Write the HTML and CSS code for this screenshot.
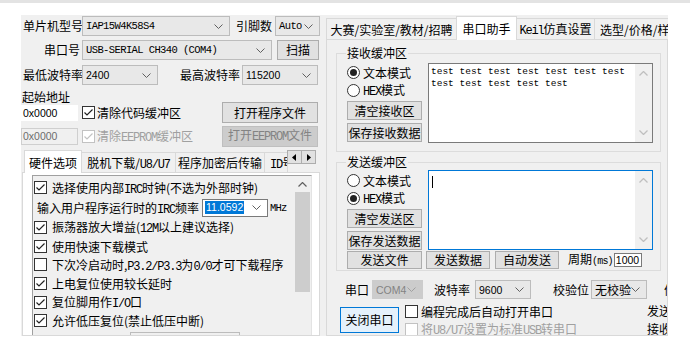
FILE: index.html
```html
<!DOCTYPE html>
<html>
<head>
<meta charset="utf-8">
<title>STC-ISP</title>
<link rel="stylesheet" href="styles.css">
</head>
<body>
<div class="topband"></div>
<div class="app">
  <section class="leftcol">
    <div class="row r1">
      <span class="lbl lw">单片机型号</span>
      <div class="combo w148"><span class="mono">IAP15W4K58S4</span><svg class="chev" width="9" height="5" viewBox="0 0 9 5"><path d="M0.5 0.5L4.5 4.5L8.5 0.5"/></svg></div>
      <span class="lbl ml6">引脚数</span>
      <div class="combo w45 ml3"><span class="mono">Auto</span><svg class="chev" width="9" height="5" viewBox="0 0 9 5"><path d="M0.5 0.5L4.5 4.5L8.5 0.5"/></svg></div>
    </div>
    <div class="row r2">
      <span class="lbl lw tar">串口号</span>
      <div class="combo w190"><span class="mono">USB-SERIAL CH340 (COM4)</span><svg class="chev" width="9" height="5" viewBox="0 0 9 5"><path d="M0.5 0.5L4.5 4.5L8.5 0.5"/></svg></div>
      <button class="btn w42 ml5">扫描</button>
    </div>
    <div class="row r3">
      <span class="lbl lw">最低波特率</span>
      <div class="combo w76"><span class="num">2400</span><svg class="chev" width="9" height="5" viewBox="0 0 9 5"><path d="M0.5 0.5L4.5 4.5L8.5 0.5"/></svg></div>
      <span class="lbl ml22">最高波特率</span>
      <div class="combo w76 ml2"><span class="num">115200</span><svg class="chev" width="9" height="5" viewBox="0 0 9 5"><path d="M0.5 0.5L4.5 4.5L8.5 0.5"/></svg></div>
    </div>
    <div class="row r4"><span class="lbl">起始地址</span></div>
    <div class="row r5">
      <div class="addr">0x0000</div>
      <label class="chk ml4"><span class="box"><svg width="11" height="11" viewBox="0 0 11 11"><path d="M1.5 5.5L4 8L9.5 2.5"/></svg></span><span class="tx">清除代码缓冲区</span></label>
      <button class="btn w96 push">打开程序文件</button>
    </div>
    <div class="row r6">
      <div class="addr dis">0x0000</div>
      <label class="chk ml4 dis"><span class="box"><svg width="11" height="11" viewBox="0 0 11 11"><path d="M1.5 5.5L4 8L9.5 2.5"/></svg></span><span class="tx">清除<span class="m">EEPROM</span>缓冲区</span></label>
      <button class="btn w96 push dis">打开<span class="m">EEPROM</span>文件</button>
    </div>
    <div class="ltabs">
      <div class="tab sel t1"><span class="tx">硬件选项</span></div>
      <div class="tab t2"><span class="tx">脱机下载/<span class="m">U8/U7</span></span></div>
      <div class="tab t3"><span class="tx">程序加密后传输</span></div>
      <div class="tab t4"><span class="tx"><span class="m">ID</span>号</span></div>
      <div class="arrows">
        <span class="arr"><svg width="5" height="7" viewBox="0 0 5 7"><path d="M4 0L0 3.5L4 7Z"/></svg></span><span class="arr"><svg width="5" height="7" viewBox="0 0 5 7"><path d="M1 0L5 3.5L1 7Z"/></svg></span>
      </div>
    </div>
    <div class="lpanel">
      <div class="listbox">
        <div class="items">
          <div class="item"><span class="box"><svg width="11" height="11" viewBox="0 0 11 11"><path d="M1.5 5.5L4 8L9.5 2.5"/></svg></span><span class="tx">选择使用内部<span class="m">IRC</span>时钟(不选为外部时钟)</span></div>
          <div class="item freq"><span class="ftxt">输入用户程序运行时的<span class="m">IRC</span>频率</span><div class="fcombo"><span class="selv">11.0592</span><svg class="chev" width="9" height="5" viewBox="0 0 9 5"><path d="M0.5 0.5L4.5 4.5L8.5 0.5"/></svg></div><span class="m mhz">MHz</span></div>
          <div class="item"><span class="box"><svg width="11" height="11" viewBox="0 0 11 11"><path d="M1.5 5.5L4 8L9.5 2.5"/></svg></span><span class="tx">振荡器放大增益(<span class="m">12M</span>以上建议选择)</span></div>
          <div class="item"><span class="box"><svg width="11" height="11" viewBox="0 0 11 11"><path d="M1.5 5.5L4 8L9.5 2.5"/></svg></span><span class="tx">使用快速下载模式</span></div>
          <div class="item"><span class="box"></span><span class="tx">下次冷启动时,<span class="m">P3.2/P3.3</span>为<span class="m">0/0</span>才可下载程序</span></div>
          <div class="item"><span class="box"><svg width="11" height="11" viewBox="0 0 11 11"><path d="M1.5 5.5L4 8L9.5 2.5"/></svg></span><span class="tx">上电复位使用较长延时</span></div>
          <div class="item"><span class="box"><svg width="11" height="11" viewBox="0 0 11 11"><path d="M1.5 5.5L4 8L9.5 2.5"/></svg></span><span class="tx">复位脚用作<span class="m">I/O</span>口</span></div>
          <div class="item"><span class="box"><svg width="11" height="11" viewBox="0 0 11 11"><path d="M1.5 5.5L4 8L9.5 2.5"/></svg></span><span class="tx">允许低压复位(禁止低压中断)</span></div>
          <div class="item freq"><span class="ftxt ind">低压检测电压</span><div class="fcombo wide"></div></div>
        </div>
        <div class="vscroll">
          <svg class="up" width="9" height="5" viewBox="0 0 9 5"><path d="M0.5 4.5L4.5 0.5L8.5 4.5"/></svg>
          <div class="thumb"></div>
        </div>
      </div>
    </div>
  </section>

  <section class="rightcol">
    <div class="rtabs">
      <div class="tab r1t"><span class="tx">大赛/实验室/教材/招聘</span></div>
      <div class="tab sel r2t"><span class="tx">串口助手</span></div>
      <div class="tab r3t"><span class="tx"><span class="m">Keil</span>仿真设置</span></div>
      <div class="tab r4t"><span class="tx">选型/价格/样品</span></div>
    </div>
    <div class="rpanel">
      <fieldset class="group g1">
        <legend>接收缓冲区</legend>
        <div class="gbody">
          <div class="gctl">
            <label class="radio"><span class="rb on"></span><span class="tx">文本模式</span></label>
            <label class="radio"><span class="rb"></span><span class="tx"><span class="m">HEX</span>模式</span></label>
            <button class="btn gbtn b1">清空接收区</button>
            <button class="btn gbtn b2">保存接收数据</button>
          </div>
          <div class="textarea">
            <div class="tatext">test test test test test test test<br>test test test test test</div>
            <div class="tascroll"><svg width="9" height="5" viewBox="0 0 9 5"><path d="M0.5 4.5L4.5 0.5L8.5 4.5"/></svg><svg width="9" height="5" viewBox="0 0 9 5"><path d="M0.5 0.5L4.5 4.5L8.5 0.5"/></svg></div>
          </div>
        </div>
      </fieldset>
      <fieldset class="group g2">
        <legend>发送缓冲区</legend>
        <div class="gbody">
          <div class="gctl">
            <label class="radio"><span class="rb"></span><span class="tx">文本模式</span></label>
            <label class="radio"><span class="rb on"></span><span class="tx"><span class="m">HEX</span>模式</span></label>
            <button class="btn gbtn b1">清空发送区</button>
            <button class="btn gbtn b2">保存发送数据</button>
          </div>
          <div class="textarea focus">
            <div class="tatext"><span class="caret"></span></div>
            <div class="tascroll"><svg width="9" height="5" viewBox="0 0 9 5"><path d="M0.5 4.5L4.5 0.5L8.5 4.5"/></svg><svg width="9" height="5" viewBox="0 0 9 5"><path d="M0.5 0.5L4.5 4.5L8.5 0.5"/></svg></div>
          </div>
        </div>
        <div class="sendrow">
          <button class="btn sb1">发送文件</button>
          <button class="btn sb2">发送数据</button>
          <button class="btn sb3">自动发送</button>
          <span class="lbl period">周期<span class="m">(ms)</span></span>
          <div class="ms">1000</div>
        </div>
      </fieldset>
      <div class="portrow">
        <span class="lbl">串口</span>
        <div class="combo dis cport"><span class="num">COM4</span><svg class="chev" width="9" height="5" viewBox="0 0 9 5"><path d="M0.5 0.5L4.5 4.5L8.5 0.5"/></svg></div>
        <span class="lbl baudl">波特率</span>
        <div class="combo cbaud"><span class="num">9600</span><svg class="chev" width="9" height="5" viewBox="0 0 9 5"><path d="M0.5 0.5L4.5 4.5L8.5 0.5"/></svg></div>
        <span class="lbl parl">校验位</span>
        <div class="combo cpar"><span>无校验</span><svg class="chev" width="9" height="5" viewBox="0 0 9 5"><path d="M0.5 0.5L4.5 4.5L8.5 0.5"/></svg></div>
        <span class="lbl stopl">停止位</span>
      </div>
      <div class="bottomrow">
        <button class="btn closebtn">关闭串口</button>
        <div class="opts">
          <label class="chk"><span class="box"></span><span class="tx">编程完成后自动打开串口</span></label>
          <label class="chk dis"><span class="box"></span><span class="tx">将<span class="m">U8/U7</span>设置为标准<span class="m">USB</span>转串口</span></label>
        </div>
        <div class="stats">
          <span>发送</span>
          <span>接收</span>
        </div>
      </div>
    </div>
  </section>
</div>
</body>
</html>
```

FILE: styles.css
```css
* { box-sizing: border-box; }
body {
  margin: 0;
  background: #fff;
  font-family: "Noto Sans CJK SC", "Noto Sans", sans-serif;
  font-size: 12px;
  color: #000;
}
.topband { height: 3px; background: #e3e3e3; }
.app {
  margin: 12px 0 0 21px;
  width: 647px;
  height: 321px;
  background: #f0f0f0;
  display: flex;
  gap: 4px;
  overflow: hidden;
}
.tx { white-space: nowrap; }
.mono, .m {
  font-family: "Liberation Mono", monospace;
}
.mono { font-size: 10.5px; letter-spacing: -0.6px; }
.m { font-size: 12px; letter-spacing: -1.2px; }
.num { font-family: "Liberation Sans", sans-serif; font-size: 10.5px; }
.lbl { white-space: nowrap; line-height: 14px; }
.lw { width: 61px; padding-left: 2px; }
.tar { text-align: right; padding-right: 2px; padding-left: 0; }
.ml2 { margin-left: 2px; } .ml3 { margin-left: 3px; } .ml4 { margin-left: 4px; }
.ml5 { margin-left: 5px; } .ml6 { margin-left: 6px; } .ml22 { margin-left: 22px; }

.leftcol { width: 301px; flex: none; display: flex; flex-direction: column; }
.row { display: flex; align-items: center; flex: none; }
.r1 { margin-top: 1px; height: 20px; }
.r2 { margin-top: 4px; height: 20px; }
.r3 { margin-top: 5px; height: 20px; }
.r4 { margin-top: 5px; height: 14px; padding-left: 1px; }
.r5 { margin-top: -2px; height: 21px; }
.r6 { margin-top: 3px; height: 20px; }

.combo {
  height: 20px;
  border: 1px solid #bcbcbc;
  background: #e8e8e8;
  display: flex;
  align-items: center;
  justify-content: space-between;
  padding: 0 6px 0 3px;
  white-space: nowrap;
  flex: none;
}
.chev path { fill: none; stroke: #606060; stroke-width: 1; }
.w148 { width: 148px; } .w45 { width: 45px; } .w190 { width: 190px; }
.w76 { width: 76px; } .w42 { width: 42px; } .w96 { width: 96px; }

.btn {
  font-family: "Noto Sans CJK SC", sans-serif;
  font-size: 12px;
  color: #000;
  background: #e1e1e1;
  border: 1px solid #adadad;
  height: 20px;
  padding: 0;
  line-height: 16px;
  flex: none;
  white-space: nowrap;
}
.push { margin-left: auto; margin-right: 4px; height: 21px; }
.btn.dis { background: #cccccc; border-color: #bfbfbf; color: #838383; }

.addr {
  width: 57px; height: 16px;
  background: #fff;
  font-family: "Liberation Sans", sans-serif; font-size: 10.5px;
  line-height: 16px; padding-left: 2px;
  flex: none;
}
.addr.dis { height: 17px; background: #f0f0f0; border: 1px solid #cfcfcf; color: #6d6d6d; padding-left: 1px; line-height: 15px; }

.chk { display: flex; align-items: center; white-space: nowrap; }
.box {
  width: 13px; height: 13px; border: 1px solid #333;
  background: #fff; flex: none; margin-right: 2px;
  display: flex; align-items: center; justify-content: center;
}
.box path { fill: none; stroke: #222; stroke-width: 1.2; }
.chk.dis { color: #a0a0a0; }
.chk.dis .box { border-color: #c2c2c2; }
.chk.dis .box path { stroke: #c2c2c2; }

.ltabs { display: flex; margin-top: 4px; height: 22px; align-items: flex-end; flex: none; position: relative; z-index: 1; }
.tab {
  height: 20px;
  border: 1px solid #d9d9d9;
  border-bottom: none;
  background: #f0f0f0;
  display: flex; align-items: center; justify-content: center;
  white-space: nowrap; overflow: hidden; flex: none;
  margin-left: -1px;
}
.tab.sel { height: 23px; background: #fff; margin-bottom: -1px; position: relative; z-index: 2; }
.t1 { width: 58px; margin-left: 3px; }
.t2 { width: 95px; }
.t3 { width: 90px; }
.t4 { width: 24px; justify-content: flex-start; padding-left: 5px; }
.arrows { display: flex; margin-left: 0; align-self: flex-start; }
.arr {
  width: 15px; height: 14px; border: 1px solid #adadad; background: #e1e1e1;
  display: flex; align-items: center; justify-content: center; margin-left: -1px;
}
.arr path { fill: #000; }

.lpanel {
  margin-left: 1px;
  width: 298px;
  flex: 1;
  border: 1px solid #d9d9d9;
  background: #fff;
  padding: 2px 0 0 9px;
  overflow: hidden;
}
.listbox {
  width: 280px;
  height: 200px;
  border: 1px solid #a0a0a0;
  border-right-color: #e3e3e3;
  background: #f0f0f0;
  display: flex;
}
.items { flex: 1; padding-top: 2px; overflow: hidden; }
.item { height: 18.7px; display: flex; align-items: center; padding-left: 1px; white-space: nowrap; }
.item .box { margin-right: 5px; }
.item:first-child { height: 19px; }
.item.freq { height: 21px; }
.ftxt { padding-left: 3px; }
.ind { padding-left: 21px; }
.fcombo {
  width: 66px; height: 18px; margin-left: 3px;
  background: #fff; border: 1px solid #7a7a7a;
  display: flex; align-items: center; justify-content: space-between; padding: 0 6px 0 2px;
}
.fcombo.wide { width: 110px; border-color: #bcbcbc; background: #f0f0f0; }
.selv { background: #0078d7; color: #fff; font-family: "Liberation Sans", sans-serif; font-size: 10.5px; line-height: 13px; padding: 0 1px; }
.mhz { margin-left: 2px; font-size: 10.5px; letter-spacing: -0.8px; }
.vscroll { width: 17px; flex: none; background: #f0f0f0; display: flex; flex-direction: column; align-items: center; }
.vscroll .up { margin-top: 6px; }
.vscroll path { fill: none; stroke: #606060; stroke-width: 1.2; }
.thumb { width: 15px; height: 100px; background: #cdcdcd; margin-top: 5px; }

.rightcol { width: 342px; flex: none; display: flex; flex-direction: column; }
.rtabs { display: flex; height: 23px; margin-top: 1px; align-items: flex-end; flex: none; position: relative; z-index: 1; }
.rtabs .tab { height: 21px; }
.rtabs .tab.sel { height: 24px; }
.r1t { width: 131px; margin-left: 0; }
.r2t { width: 61px; }
.r3t { width: 79px; }
.r4t { width: 80px; justify-content: flex-start; padding-left: 5px; }
.rpanel {
  width: 342px;
  flex: 1;
  border: 1px solid #d9d9d9;
  background: #f0f0f0;
  display: flex; flex-direction: column;
  overflow: hidden;
}
.group {
  margin: 0 0 0 9px;
  padding: 0 6px 0 10px;
  width: 325px;
  border: 1px solid #dcdcdc;
  min-width: 0;
  flex: none;
}
.group legend { padding: 0 1px; margin-left: -1px; line-height: 14px; height: 14px; }
.g1 { margin-top: 6px; height: 106px; }
.g2 { margin-top: 3px; height: 116px; }
.gbody { display: flex; }
.gctl { width: 75px; flex: none; display: flex; flex-direction: column; }
.radio { display: flex; align-items: center; height: 18px; white-space: nowrap; }
.g1 .radio:first-child { margin-top: 3px; }
.g2 .radio:first-child { margin-top: 2px; }
.rb {
  width: 13px; height: 13px; border: 1px solid #333; border-radius: 50%; background: #fff;
  margin-right: 3px; flex: none; display: flex; align-items: center; justify-content: center;
}
.rb.on::after { content: ""; width: 7px; height: 7px; border-radius: 50%; background: #222; }
.gbtn { width: 75px; height: 19px; }
.b1 { margin-top: 2px; }
.b2 { margin-top: 3px; }
.textarea {
  margin-left: 6px; margin-top: 3px;
  width: 225px; height: 80px;
  background: #fff; border: 1px solid #7a7a7a;
  display: flex;
}
.g2 .textarea { margin-top: 1px; }
.textarea.focus { border-color: #0078d7; }
.tatext {
  flex: 1; padding: 2px 0 0 2px;
  font-family: "Liberation Mono", monospace; font-size: 9.5px; line-height: 12px;
  white-space: nowrap; overflow: hidden;
}
.caret { display: inline-block; width: 1px; height: 12px; background: #000; margin-top: 3px; margin-left: 1px; }
.tascroll { width: 17px; flex: none; background: #f0f0f0; display: flex; flex-direction: column; justify-content: space-between; align-items: center; padding: 7px 0 7px; }
.tascroll path { fill: none; stroke: #bfbfbf; stroke-width: 1.3; }

.sendrow { display: flex; align-items: center; height: 18px; margin-top: 1px; }
.sendrow .btn { height: 18px; }
.sb1 { width: 75px; }
.sb2 { width: 64px; margin-left: 4px; }
.sb3 { width: 64px; margin-left: 5px; }
.period { margin-left: 9px; }
.period .m { font-size: 10px; letter-spacing: -0.8px; }
.ms {
  width: 28px; height: 14px; margin-left: 1px;
  background: #fff; border: 1px solid #7a7a7a;
  font-family: "Liberation Sans", sans-serif; font-size: 10.5px; line-height: 12px; padding-left: 1px;
}

.portrow { display: flex; align-items: center; height: 19px; margin-top: 9px; padding-left: 18px; white-space: nowrap; }
.combo.dis { background: #cccccc; border-color: #cccccc; color: #838383; }
.combo.dis .chev path { stroke: #a0a0a0; }
.cport { width: 51px; height: 19px; margin-left: 3px; }
.baudl { margin-left: 11px; }
.cbaud { width: 56px; height: 19px; margin-left: 5px; }
.parl { margin-left: 22px; }
.cpar { width: 56px; height: 19px; margin-left: 2px; }
.stopl { margin-left: 17px; }

.bottomrow { display: flex; margin-top: 3px; padding-left: 13px; align-items: flex-start; }
.closebtn { width: 59px; height: 26px; margin-top: 5px; background: #e5f1fb; border-color: #0078d7; }
.opts { display: flex; flex-direction: column; margin-left: 6px; }
.opts .chk { height: 18px; }
.opts .box { margin-right: 3px; }
.stats { display: flex; flex-direction: column; margin-left: auto; margin-right: -4px; }
.stats span { height: 18px; line-height: 18px; white-space: nowrap; }
```
